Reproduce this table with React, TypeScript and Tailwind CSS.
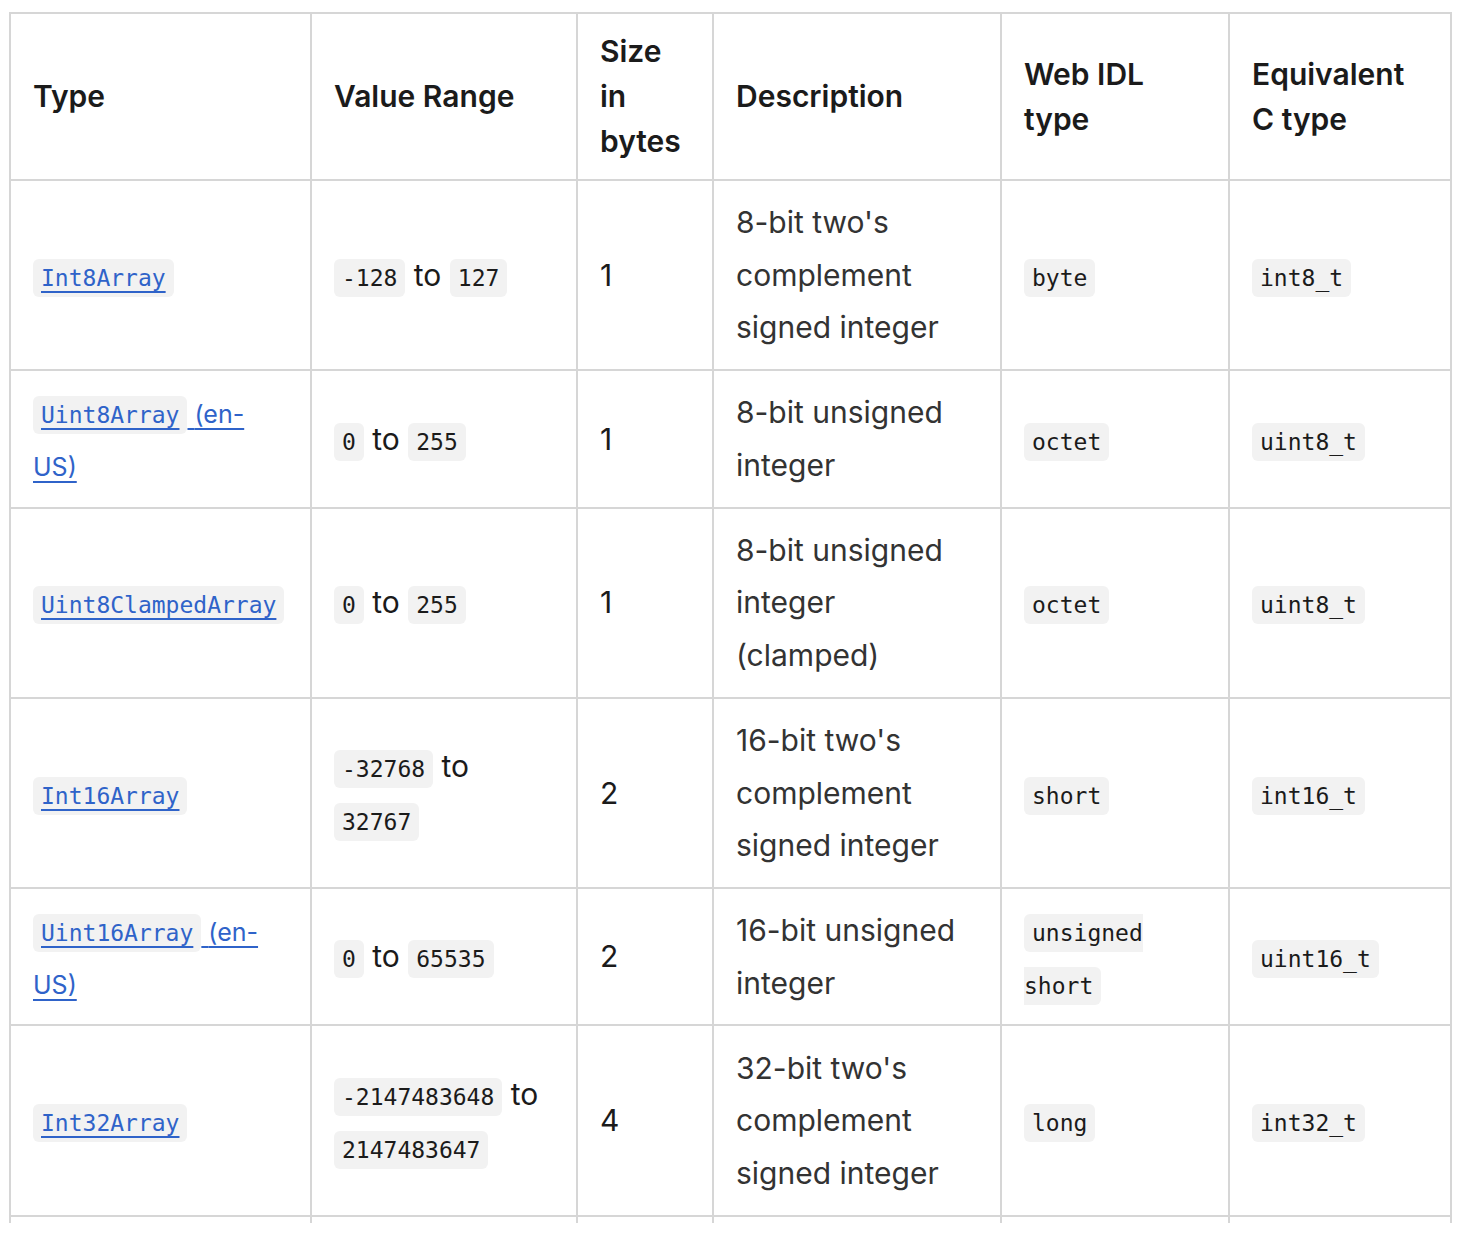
import React from 'react'

const sans = "font-['Inter','Noto_Sans',sans-serif]"
const mono = "font-['DejaVu_Sans_Mono','Liberation_Mono',monospace]"

function Code({ children }: { children: React.ReactNode }) {
  return (
    <code className={`${mono} text-[23px] leading-none bg-[#f2f2f2] rounded-[6px] px-[8px] py-[6px] text-[#1b1b1b]`}>
      {children}
    </code>
  )
}

function TypeLink({ name, locale }: { name: string; locale?: boolean }) {
  return (
    <a href="#" className="text-[#2f63c9] underline underline-offset-[5px] decoration-[2px]">
      <code className={`${mono} text-[23px] leading-none bg-[#f2f2f2] rounded-[6px] px-[8px] py-[6px] text-[#2f63c9]`}>{name}</code>
      {locale && (
        <span className="text-[25px] leading-none">
          {' '}(en-
          <br />
          US)
        </span>
      )}
    </a>
  )
}

interface Row {
  type: React.ReactNode
  range: React.ReactNode
  size: string
  desc: string[]
  idl: React.ReactNode
  c: string
}

const rows: Row[] = [
  {
    type: <TypeLink name="Int8Array" />,
    range: <><Code>-128</Code> to <Code>127</Code></>,
    size: '1',
    desc: ["8-bit two's", 'complement', 'signed integer'],
    idl: <Code>byte</Code>,
    c: 'int8_t',
  },
  {
    type: <TypeLink name="Uint8Array" locale />,
    range: <><Code>0</Code> to <Code>255</Code></>,
    size: '1',
    desc: ['8-bit unsigned', 'integer'],
    idl: <Code>octet</Code>,
    c: 'uint8_t',
  },
  {
    type: <TypeLink name="Uint8ClampedArray" />,
    range: <><Code>0</Code> to <Code>255</Code></>,
    size: '1',
    desc: ['8-bit unsigned', 'integer', '(clamped)'],
    idl: <Code>octet</Code>,
    c: 'uint8_t',
  },
  {
    type: <TypeLink name="Int16Array" />,
    range: <><Code>-32768</Code> to<br /><Code>32767</Code></>,
    size: '2',
    desc: ["16-bit two's", 'complement', 'signed integer'],
    idl: <Code>short</Code>,
    c: 'int16_t',
  },
  {
    type: <TypeLink name="Uint16Array" locale />,
    range: <><Code>0</Code> to <Code>65535</Code></>,
    size: '2',
    desc: ['16-bit unsigned', 'integer'],
    idl: <Code>unsigned<br />short</Code>,
    c: 'uint16_t',
  },
  {
    type: <TypeLink name="Int32Array" />,
    range: <><Code>-2147483648</Code> to<br /><Code>2147483647</Code></>,
    size: '4',
    desc: ["32-bit two's", 'complement', 'signed integer'],
    idl: <Code>long</Code>,
    c: 'int32_t',
  },
]

const th = 'border-2 border-[#d6d6d6] px-[22px] py-[15px] text-left align-middle font-semibold leading-[45px]'
const td = 'border-2 border-[#d6d6d6] px-[22px] py-[15.3px] align-middle leading-[52.5px]'

export default function App() {
  return (
    <div className={`${sans} bg-white w-[1464px] h-[1234px]`}>
      <div className="pl-[9px] pt-[12px] h-[1223px] overflow-hidden">
        <table className="table-fixed border-collapse w-[1441px] text-[30px] text-[#1b1b1b]">
          <colgroup>
            <col className="w-[301px]" />
            <col className="w-[266px]" />
            <col className="w-[136px]" />
            <col className="w-[288px]" />
            <col className="w-[228px]" />
            <col className="w-[222px]" />
          </colgroup>
          <thead>
            <tr>
              <th className={th}>Type</th>
              <th className={th}>Value Range</th>
              <th className={th}>Size<br />in<br />bytes</th>
              <th className={th}>Description</th>
              <th className={th}>Web IDL<br />type</th>
              <th className={th}>Equivalent<br />C type</th>
            </tr>
          </thead>
          <tbody>
            {rows.map((r, i) => (
              <tr key={i}>
                <td className={td}>{r.type}</td>
                <td className={td}>{r.range}</td>
                <td className={td}>{r.size}</td>
                <td className={`${td} text-[#333]`}>
                  {r.desc.map((line, j) => (
                    <React.Fragment key={j}>
                      {j > 0 && <br />}
                      {line}
                    </React.Fragment>
                  ))}
                </td>
                <td className={td}>{r.idl}</td>
                <td className={td}><Code>{r.c}</Code></td>
              </tr>
            ))}
            {/* next row, cut off by the screenshot edge */}
            <tr className="h-[60px]">
              <td className={td} />
              <td className={td} />
              <td className={td} />
              <td className={td} />
              <td className={td} />
              <td className={td} />
            </tr>
          </tbody>
        </table>
      </div>
    </div>
  )
}
